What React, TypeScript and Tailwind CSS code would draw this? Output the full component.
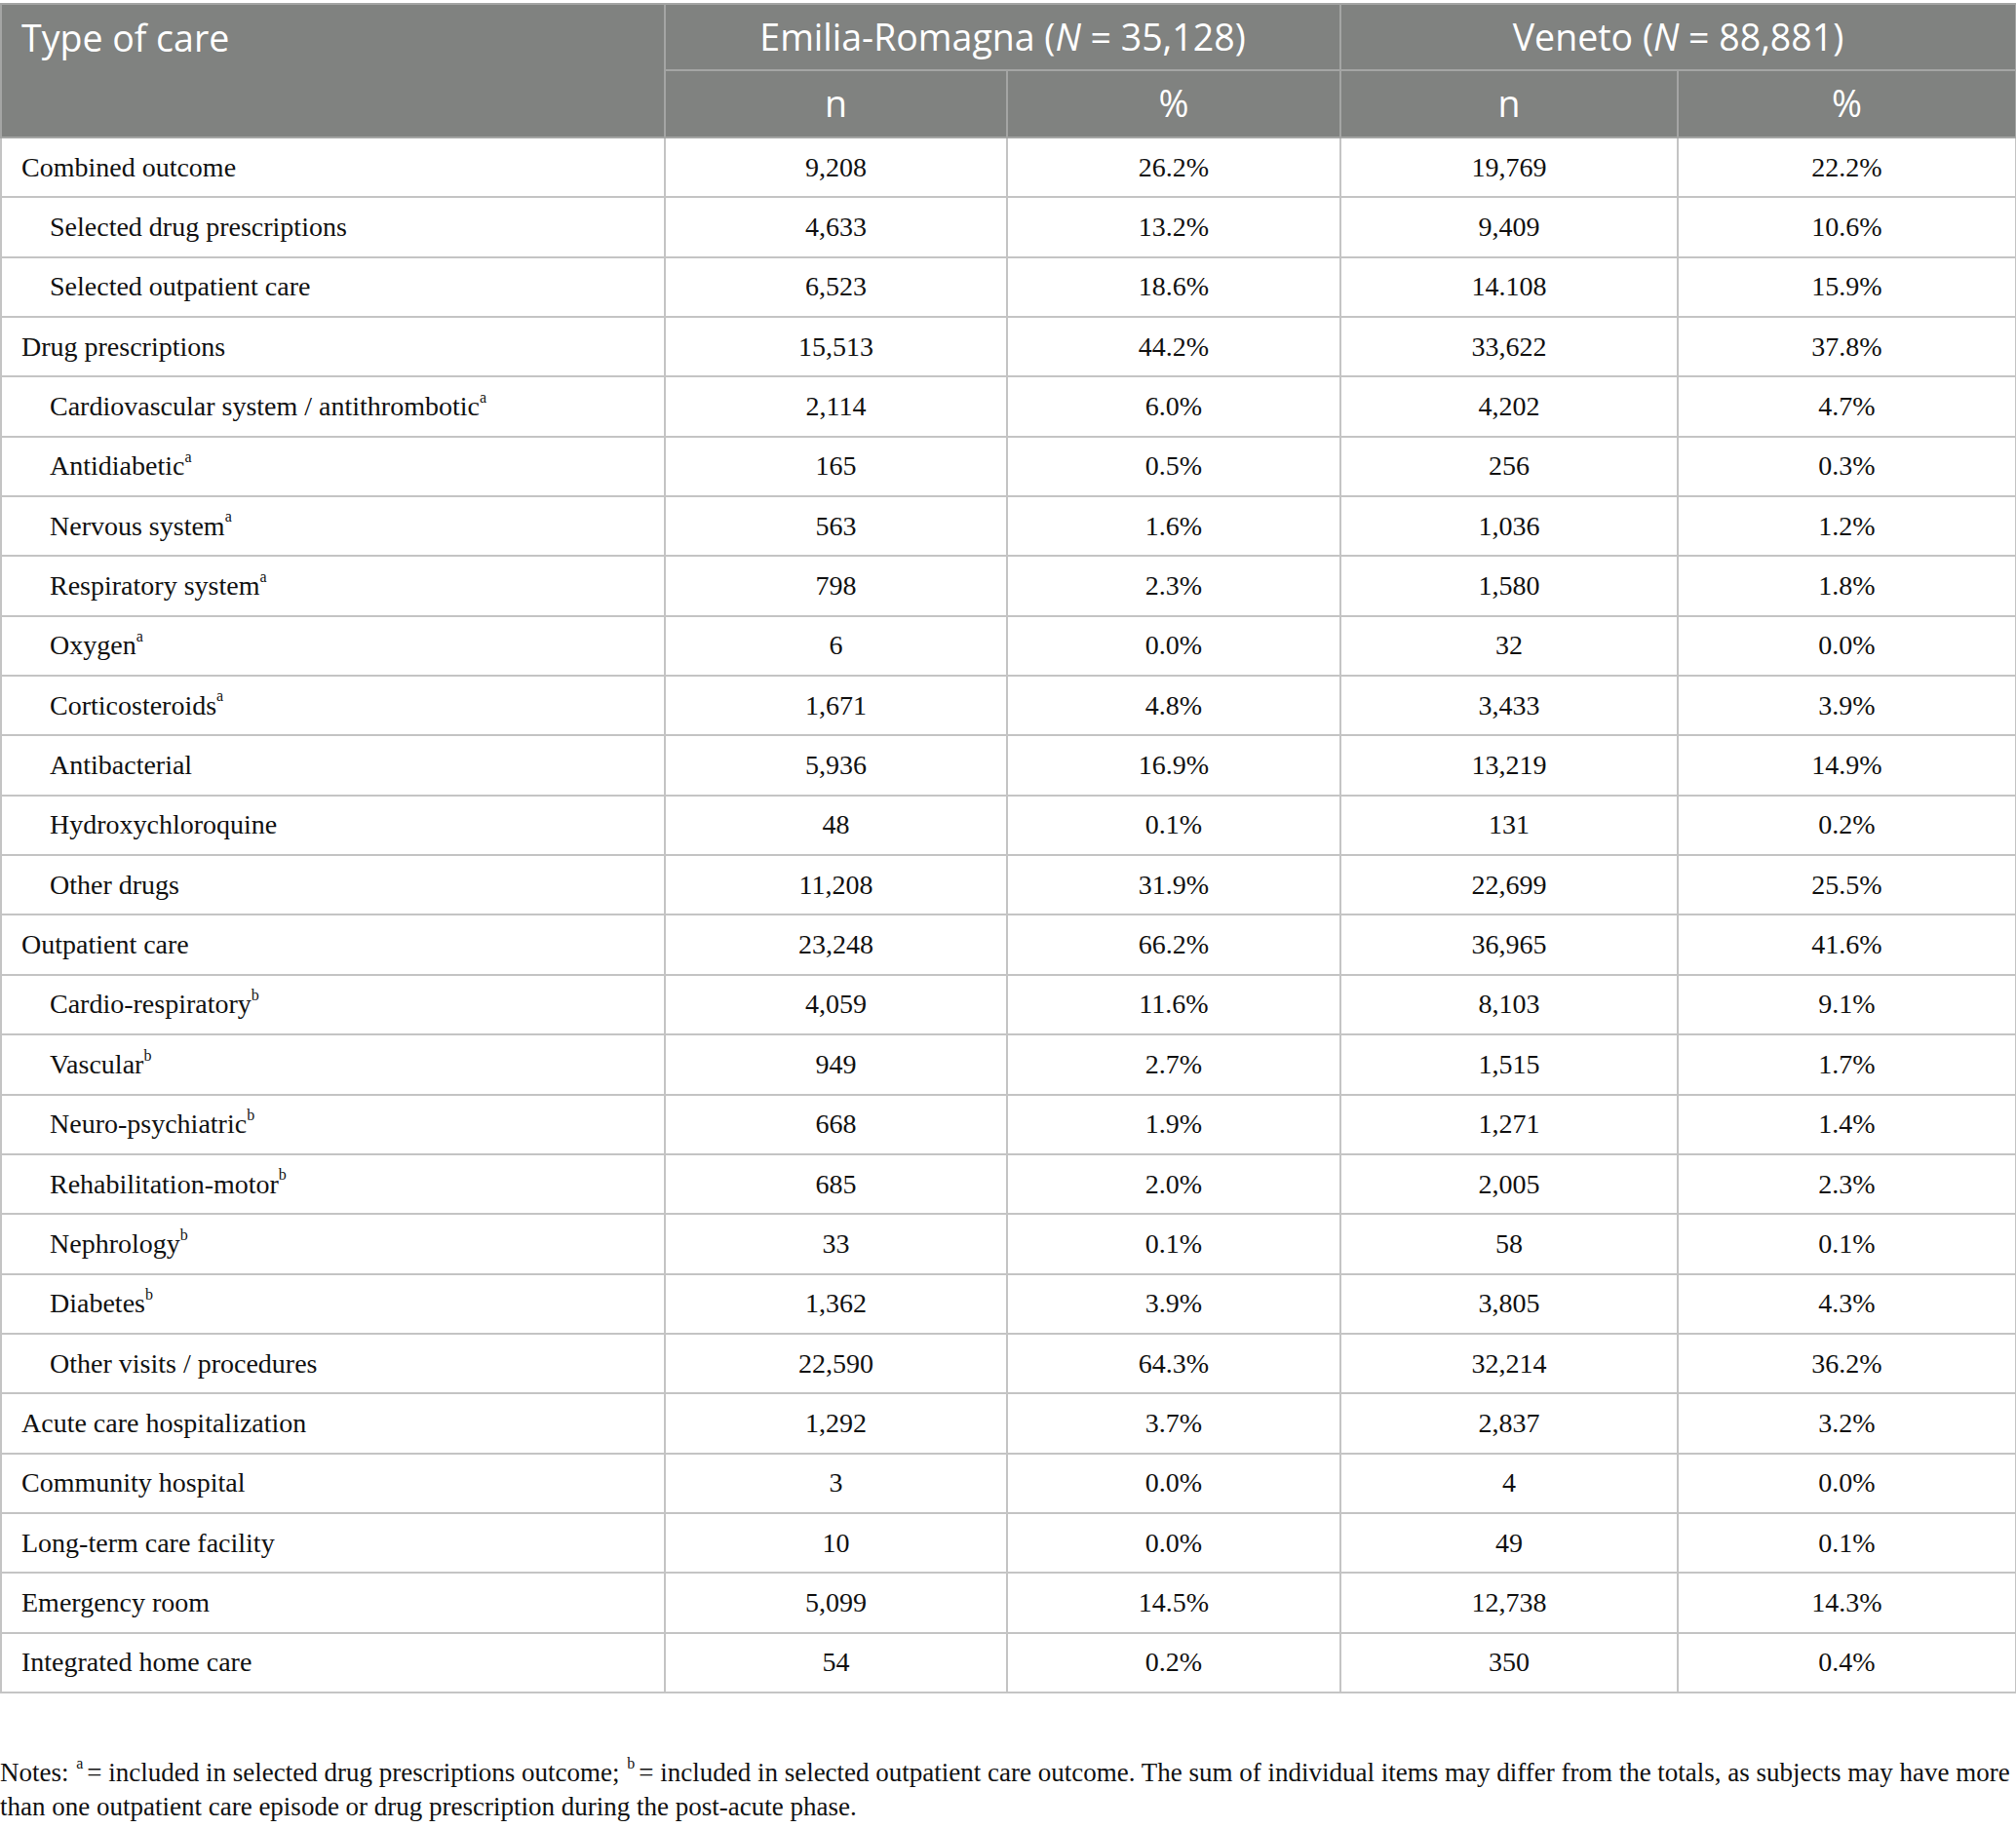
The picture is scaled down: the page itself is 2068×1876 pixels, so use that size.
import React from 'react';

type Row = {
  label: string;
  sub?: boolean;
  mark?: 'a' | 'b';
  vals: [string, string, string, string];
};

const rows: Row[] = [
  { label: 'Combined outcome', vals: ['9,208', '26.2%', '19,769', '22.2%'] },
  { label: 'Selected drug prescriptions', sub: true, vals: ['4,633', '13.2%', '9,409', '10.6%'] },
  { label: 'Selected outpatient care', sub: true, vals: ['6,523', '18.6%', '14.108', '15.9%'] },
  { label: 'Drug prescriptions', vals: ['15,513', '44.2%', '33,622', '37.8%'] },
  { label: 'Cardiovascular system / antithrombotic', sub: true, mark: 'a', vals: ['2,114', '6.0%', '4,202', '4.7%'] },
  { label: 'Antidiabetic', sub: true, mark: 'a', vals: ['165', '0.5%', '256', '0.3%'] },
  { label: 'Nervous system', sub: true, mark: 'a', vals: ['563', '1.6%', '1,036', '1.2%'] },
  { label: 'Respiratory system', sub: true, mark: 'a', vals: ['798', '2.3%', '1,580', '1.8%'] },
  { label: 'Oxygen', sub: true, mark: 'a', vals: ['6', '0.0%', '32', '0.0%'] },
  { label: 'Corticosteroids', sub: true, mark: 'a', vals: ['1,671', '4.8%', '3,433', '3.9%'] },
  { label: 'Antibacterial', sub: true, vals: ['5,936', '16.9%', '13,219', '14.9%'] },
  { label: 'Hydroxychloroquine', sub: true, vals: ['48', '0.1%', '131', '0.2%'] },
  { label: 'Other drugs', sub: true, vals: ['11,208', '31.9%', '22,699', '25.5%'] },
  { label: 'Outpatient care', vals: ['23,248', '66.2%', '36,965', '41.6%'] },
  { label: 'Cardio-respiratory', sub: true, mark: 'b', vals: ['4,059', '11.6%', '8,103', '9.1%'] },
  { label: 'Vascular', sub: true, mark: 'b', vals: ['949', '2.7%', '1,515', '1.7%'] },
  { label: 'Neuro-psychiatric', sub: true, mark: 'b', vals: ['668', '1.9%', '1,271', '1.4%'] },
  { label: 'Rehabilitation-motor', sub: true, mark: 'b', vals: ['685', '2.0%', '2,005', '2.3%'] },
  { label: 'Nephrology', sub: true, mark: 'b', vals: ['33', '0.1%', '58', '0.1%'] },
  { label: 'Diabetes', sub: true, mark: 'b', vals: ['1,362', '3.9%', '3,805', '4.3%'] },
  { label: 'Other visits / procedures', sub: true, vals: ['22,590', '64.3%', '32,214', '36.2%'] },
  { label: 'Acute care hospitalization', vals: ['1,292', '3.7%', '2,837', '3.2%'] },
  { label: 'Community hospital', vals: ['3', '0.0%', '4', '0.0%'] },
  { label: 'Long-term care facility', vals: ['10', '0.0%', '49', '0.1%'] },
  { label: 'Emergency room', vals: ['5,099', '14.5%', '12,738', '14.3%'] },
  { label: 'Integrated home care', vals: ['54', '0.2%', '350', '0.4%'] },
];

const serif = "font-['Liberation_Serif','Times_New_Roman',serif]";
const sans = "font-['Open_Sans','Noto_Sans',sans-serif]";

// small raised footnote marker
function Sup({ c, gap }: { c: string; gap?: boolean }) {
  return (
    <sup
      className={`relative -top-[3px] inline-block text-[16px] leading-none align-super ${gap ? 'ml-[1px] mr-[4px]' : ''}`}
    >
      {c}
    </sup>
  );
}

export default function App() {
  return (
    <div className="w-[2068px] min-h-[1876px] bg-white pt-[3px]">
      <table className="w-[2067px] table-fixed border-collapse border-2 border-[#c4c4c4]">
        <colgroup>
          <col className="w-[681px]" />
          <col className="w-[351px]" />
          <col className="w-[342px]" />
          <col className="w-[346px]" />
          <col className="w-[347px]" />
        </colgroup>
        <thead className={`${sans} bg-[#808280] text-white text-[37.5px]`}>
          <tr className="h-[68px]">
            <th
              rowSpan={2}
              className="border-2 border-[#a4a5a4] px-[20px] pt-[12px] text-left align-top font-normal leading-[44px]"
            >
              Type of care
            </th>
            <th colSpan={2} className="border-2 border-[#a4a5a4] text-center font-normal leading-[44px]">
              Emilia-Romagna (<i>N</i> = 35,128)
            </th>
            <th colSpan={2} className="border-2 border-[#a4a5a4] text-center font-normal leading-[44px]">
              Veneto (<i>N</i> = 88,881)
            </th>
          </tr>
          <tr className="h-[69px]">
            <th className="border-2 border-[#a4a5a4] text-center font-normal">n</th>
            <th className="border-2 border-[#a4a5a4] text-center font-normal">%</th>
            <th className="border-2 border-[#a4a5a4] text-center font-normal">n</th>
            <th className="border-2 border-[#a4a5a4] text-center font-normal">%</th>
          </tr>
        </thead>
        <tbody className={`${serif} text-[28px] text-[#111]`}>
          {rows.map((r) => (
            <tr key={r.label} className="h-[61.35px]">
              <td className={`border-2 border-[#c4c4c4] pr-4 ${r.sub ? 'pl-[49px]' : 'pl-[20px]'}`}>
                {r.label}
                {r.mark && <Sup c={r.mark} />}
              </td>
              {r.vals.map((v, i) => (
                <td key={i} className="border-2 border-[#c4c4c4] text-center">
                  {v}
                </td>
              ))}
            </tr>
          ))}
        </tbody>
      </table>

      <p className={`${serif} mt-[64px] text-[27px] leading-[35px] text-[#111]`}>
        Notes: <Sup c="a" gap />= included in selected drug prescriptions outcome; <Sup c="b" gap />= included in
        selected outpatient care outcome. The sum of individual items may differ from the totals, as subjects may have
        more than one outpatient care episode or drug prescription during the post-acute phase.
      </p>
    </div>
  );
}
